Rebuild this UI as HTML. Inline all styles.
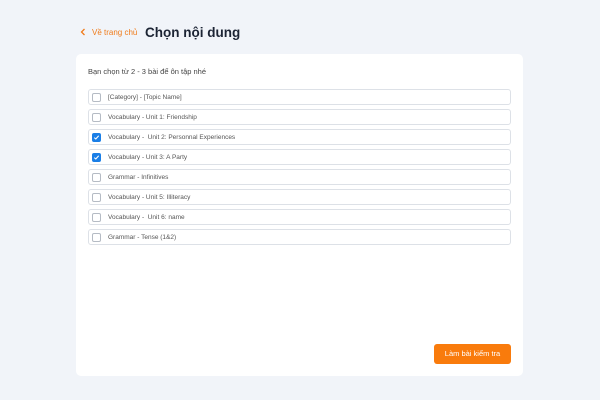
<!DOCTYPE html>
<html><head><style>
body{margin:0;width:600px;height:400px;background:#f1f4f9;font-family:"Liberation Sans","Noto Sans CJK SC",sans-serif;position:relative;overflow:hidden}
.back{position:absolute;left:80px;top:27px;color:#f07b1a;font-size:8px}
.back svg{position:absolute;left:0;top:1px}
.back span{position:absolute;left:12px;top:1px;white-space:nowrap}
h1{position:absolute;left:145px;top:25px;margin:0;font-size:13.5px;font-weight:bold;color:#1c2434}
.card{position:absolute;left:76px;top:54px;width:447px;height:322px;background:#fff;border-radius:5px}
.hint{position:absolute;left:88px;top:67px;font-size:7.5px;color:#444}
.row{position:absolute;left:88px;width:421px;height:14px;border:1px solid #dde1e7;border-radius:3px;font-size:6.5px;color:#555}
.row i{position:absolute;left:3px;top:3px;width:7px;height:7px;border:1px solid #b5bbc4;border-radius:2px;background:#fff}
.row i.c{background:#1a7ee6;border-color:#1a7ee6}
.row b{font-weight:normal;position:absolute;left:19px;top:4px;white-space:nowrap}
.btn{position:absolute;left:434px;top:344px;width:77px;height:20px;background:#f97b0c;border-radius:3px;color:#fff;font-size:7.5px;text-align:center;line-height:20px}
</style></head><body>
<div class="back"><svg width="6" height="8" viewBox="0 0 6 8"><path d="M4.5 1L1.5 4L4.5 7" stroke="#f07b1a" stroke-width="1.3" fill="none"/></svg><span>Về trang chủ</span></div>
<h1>Chọn nội dung</h1>
<div class="card"></div>
<div class="hint">Bạn chọn từ 2 - 3 bài để ôn tập nhé</div>
<div class="row" style="top:89px"><i></i><b>[Category] - [Topic Name]</b></div>
<div class="row" style="top:109px"><i></i><b>Vocabulary - Unit 1: Friendship</b></div>
<div class="row" style="top:129px"><i class="c"><svg width="7" height="7" viewBox="0 0 7 7" style="position:absolute;left:0;top:0"><path d="M1.3 3.6L2.8 5L5.7 1.8" stroke="#fff" stroke-width="1.1" fill="none"/></svg></i><b>Vocabulary -&nbsp; Unit 2: Personnal Experiences</b></div>
<div class="row" style="top:149px"><i class="c"><svg width="7" height="7" viewBox="0 0 7 7" style="position:absolute;left:0;top:0"><path d="M1.3 3.6L2.8 5L5.7 1.8" stroke="#fff" stroke-width="1.1" fill="none"/></svg></i><b>Vocabulary - Unit 3: A Party</b></div>
<div class="row" style="top:169px"><i></i><b>Grammar - Infinitives</b></div>
<div class="row" style="top:189px"><i></i><b>Vocabulary - Unit 5: Illiteracy</b></div>
<div class="row" style="top:209px"><i></i><b>Vocabulary -&nbsp; Unit 6: name</b></div>
<div class="row" style="top:229px"><i></i><b>Grammar - Tense (1&amp;2)</b></div>
<div class="btn">Làm bài kiểm tra</div>
</body></html>
